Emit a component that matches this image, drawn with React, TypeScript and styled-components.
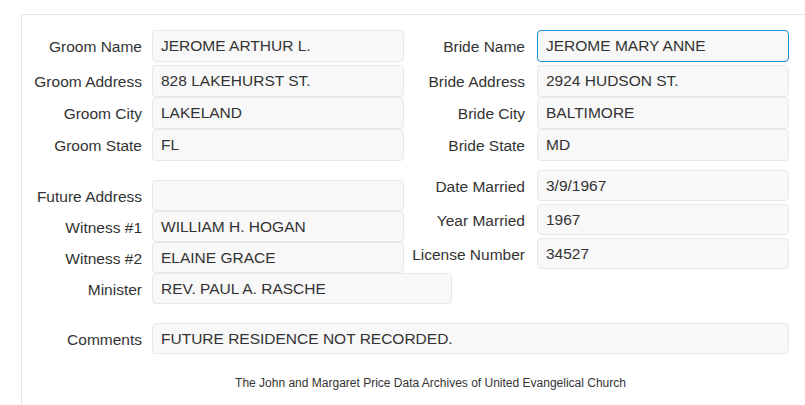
import styled, { createGlobalStyle } from "styled-components";

interface IField {
    label: string,
    value: string,
    focused?: boolean,
}

const groom: IField[] = [
    { label: "Groom Name", value: "JEROME ARTHUR L." },
    { label: "Groom Address", value: "828 LAKEHURST ST." },
    { label: "Groom City", value: "LAKELAND" },
    { label: "Groom State", value: "FL" },
];

const bride: IField[] = [
    { label: "Bride Name", value: "JEROME MARY ANNE", focused: true },
    { label: "Bride Address", value: "2924 HUDSON ST." },
    { label: "Bride City", value: "BALTIMORE" },
    { label: "Bride State", value: "MD" },
];

const others: IField[] = [
    { label: "Future Address", value: "" },
    { label: "Witness #1", value: "WILLIAM H. HOGAN" },
    { label: "Witness #2", value: "ELAINE GRACE" },
];

const marriage: IField[] = [
    { label: "Date Married", value: "3/9/1967" },
    { label: "Year Married", value: "1967" },
    { label: "License Number", value: "34527" },
];

const App = () => {
    return (
        <>
            <GlobalStyle />
            <Panel>
                <Section>
                    <Column $side="left" $gap={0} $lead>
                        {groom.map((f) => (
                            <Row key={f.label} $side="left">
                                <Label>{f.label}</Label>
                                <Box>{f.value}</Box>
                            </Row>
                        ))}
                    </Column>
                    <Column $side="right" $gap={0} $lead>
                        {bride.map((f) => (
                            <Row key={f.label} $side="right">
                                <Label>{f.label}</Label>
                                <Box $focused={f.focused}>{f.value}</Box>
                            </Row>
                        ))}
                    </Column>
                </Section>
                <Section $top={9}>
                    <Column $side="left" $gap={0} $offset={10}>
                        {others.map((f) => (
                            <Row key={f.label} $side="left" $short>
                                <Label>{f.label}</Label>
                                <Box>{f.value}</Box>
                            </Row>
                        ))}
                        <Row $side="left" $short>
                            <Label>Minister</Label>
                            <Box $width={300}>REV. PAUL A. RASCHE</Box>
                        </Row>
                    </Column>
                    <Column $side="right" $gap={3}>
                        {marriage.map((f) => (
                            <Row key={f.label} $side="right" $short>
                                <Label>{f.label}</Label>
                                <Box>{f.value}</Box>
                            </Row>
                        ))}
                    </Column>
                </Section>
                <CommentsRow>
                    <Label>Comments</Label>
                    <Box $width={637}>FUTURE RESIDENCE NOT RECORDED.</Box>
                </CommentsRow>
                <Footer>The John and Margaret Price Data Archives of United Evangelical Church</Footer>
            </Panel>
        </>
    );
};

export default App;

const GlobalStyle = createGlobalStyle`
    html, body {
        margin: 0;
        padding: 0;
        background: #ffffff;
        overflow: hidden;
    }
    body {
        font-family: "Liberation Sans", Arial, sans-serif;
        color: #333333;
    }
`;

const Panel = styled.div`
    box-sizing: border-box;
    width: 818px;
    min-height: 391px;
    margin: 14px 0 0 21px;
    padding-top: 15px;
    border-top: 1px solid #e6e6e6;
    border-left: 1px solid #e6e6e6;
`;

const Section = styled.div<{ $top?: number }>`
    display: flex;
    align-items: flex-start;
    margin-top: ${(p) => p.$top || 0}px;
`;

const Column = styled.div<{ $side: "left" | "right", $gap: number, $offset?: number, $lead?: boolean }>`
    display: flex;
    flex-direction: column;
    gap: ${(p) => p.$gap}px;
    width: ${(p) => (p.$side === "left" ? 382 : 385)}px;
    padding-top: ${(p) => p.$offset || 0}px;

    & > :first-child {
        margin-bottom: ${(p) => (p.$lead ? 3 : 0)}px;
    }
`;

const Row = styled.div<{ $side: "left" | "right", $short?: boolean }>`
    display: grid;
    grid-template-columns: ${(p) => (p.$side === "left" ? "120px auto" : "121px auto")};
    column-gap: ${(p) => (p.$side === "left" ? 10 : 12)}px;
    align-items: center;
    height: ${(p) => (p.$short ? 31 : 32)}px;
`;

const Label = styled.div`
    text-align: right;
    font-size: 15.5px;
    line-height: 18px;
    padding-top: 2px;
    color: #333333;
    white-space: nowrap;
`;

const Box = styled.div<{ $focused?: boolean, $width?: number }>`
    box-sizing: border-box;
    width: ${(p) => p.$width || 252}px;
    height: 100%;
    display: flex;
    align-items: center;
    padding: 0 8px;
    background: #f8f8f8;
    border: 1px solid ${(p) => (p.$focused ? "#1a8fcf" : "#e8e8e8")};
    border-radius: 4px;
    font-size: 15.5px;
    color: #333333;
    white-space: nowrap;
`;

const CommentsRow = styled.div`
    display: grid;
    grid-template-columns: 120px auto;
    column-gap: 10px;
    align-items: center;
    height: 31px;
    margin-top: 19px;
`;

const Footer = styled.div`
    margin-top: 22px;
    text-align: center;
    font-size: 12px;
    line-height: 14px;
    color: #333333;
`;
